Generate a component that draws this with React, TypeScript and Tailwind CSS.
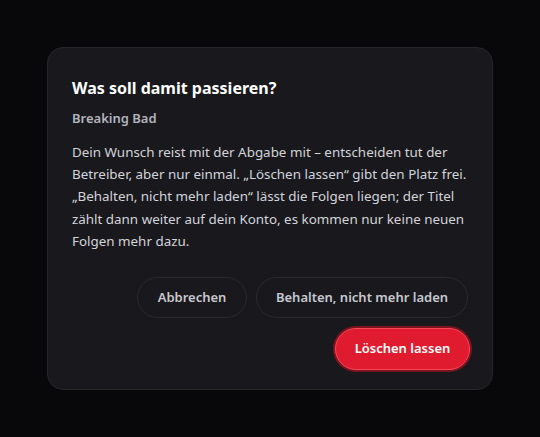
import React from "react";

export default function App() {
  return (
    <div
      className="min-h-screen w-full bg-[#08080b] flex items-center justify-center"
      style={{ fontFamily: '"Noto Sans", "Open Sans", sans-serif' }}
    >
      <div className="w-[446px] h-[343px] rounded-[16px] bg-[#18181d] border border-[#25252b] px-6 pt-[28px]">
        <h2 className="text-[16px] leading-[24px] font-bold text-white">Was soll damit passieren?</h2>
        <p className="mt-[9px] text-[13px] leading-[18px] font-semibold text-[#b4b4bb]">Breaking Bad</p>
        <p className="mt-[14px] text-[13.4px] leading-[22.2px] text-[#d4d4da]">
          Dein Wunsch reist mit der Abgabe mit – entscheiden tut der
          <br />
          Betreiber, aber nur einmal. „Löschen lassen“ gibt den Platz frei.
          <br />
          „Behalten, nicht mehr laden“ lässt die Folgen liegen; der Titel
          <br />
          zählt dann weiter auf dein Konto, es kommen nur keine neuen
          <br />
          Folgen mehr dazu.
        </p>
        <div className="mt-[25px] flex flex-wrap justify-end gap-x-[9px] gap-y-[8px]">
          <button className="h-[41px] w-[110px] rounded-full border border-[#2a2a31] bg-[#18181d] text-[13px] font-semibold text-[#c8c8ce]">
            Abbrechen
          </button>
          <button className="h-[41px] w-[212px] rounded-full border border-[#2a2a31] bg-[#18181d] text-[13px] font-semibold text-[#c8c8ce]">
            Behalten, nicht mehr laden
          </button>
          <button className="mt-[2px] mr-[-2px] h-[42px] w-[135px] rounded-full bg-[#e01b2f] border border-[#f5495a] shadow-[0_0_0_2px_#7c1420] text-[13px] font-semibold text-white">
            Löschen lassen
          </button>
        </div>
      </div>
    </div>
  );
}
